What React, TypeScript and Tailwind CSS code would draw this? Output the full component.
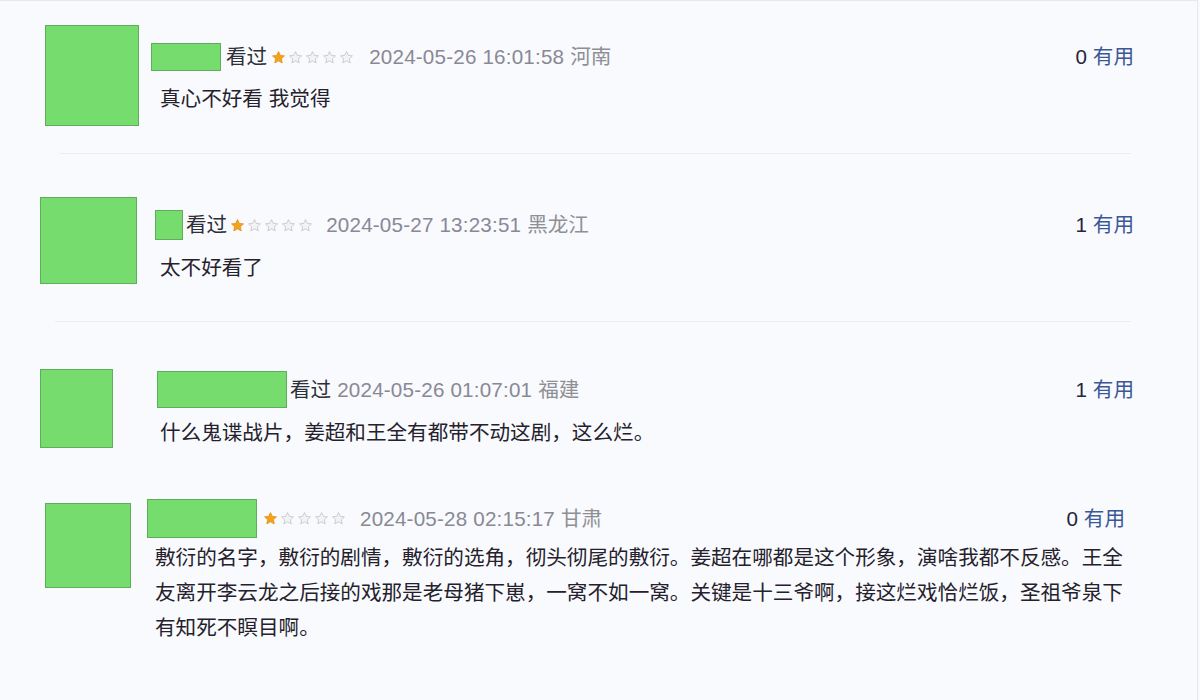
import React from "react"

type Review = {
    block: string
    avatar: string
    side: string
    nameBox: string
    watched: boolean
    watchedGap: string
    stars: boolean
    starsGap: string
    dateGap: string
    date: string
    place: string
    useful: number
    usefulRight: string
    content: string
    contentGap: string
    contentClass: string
}

const reviews: Review[] = [
    {
        block: "h-[152px]",
        avatar: "ml-[45px] mt-[24px] w-[94px] h-[101px]",
        side: "ml-[12px] mt-[42px]",
        nameBox: "w-[70px] h-[28px]",
        watched: true,
        watchedGap: "ml-[5px]",
        stars: true,
        starsGap: "ml-[4px]",
        dateGap: "ml-[15px]",
        date: "2024-05-26 16:01:58",
        place: "河南",
        useful: 0,
        usefulRight: "mr-[63px]",
        content: "真心不好看 我觉得",
        contentGap: "mt-[14px] pl-[9px]",
        contentClass: "leading-[28px]",
    },
    {
        block: "h-[167px]",
        avatar: "ml-[40px] mt-[43px] w-[97px] h-[87px]",
        side: "ml-[18px] mt-[56px]",
        nameBox: "w-[28px] h-[30px]",
        watched: true,
        watchedGap: "ml-[3px]",
        stars: true,
        starsGap: "ml-[3px]",
        dateGap: "ml-[13px]",
        date: "2024-05-27 13:23:51",
        place: "黑龙江",
        useful: 1,
        usefulRight: "mr-[63px]",
        content: "太不好看了",
        contentGap: "mt-[14px] pl-[5px]",
        contentClass: "leading-[28px]",
    },
    {
        block: "h-[159px]",
        avatar: "ml-[40px] mt-[47px] w-[73px] h-[79px]",
        side: "ml-[44px] mt-[49px]",
        nameBox: "w-[130px] h-[37px]",
        watched: true,
        watchedGap: "ml-[3px]",
        stars: false,
        starsGap: "",
        dateGap: "ml-[6px]",
        date: "2024-05-26 01:07:01",
        place: "福建",
        useful: 1,
        usefulRight: "mr-[63px]",
        content: "什么鬼谍战片，姜超和王全有都带不动这剧，这么烂。",
        contentGap: "mt-[11px] pl-[3px]",
        contentClass: "leading-[28px]",
    },
    {
        block: "flex-1",
        avatar: "ml-[45px] mt-[22px] w-[86px] h-[85px]",
        side: "ml-[16px] mt-[18px]",
        nameBox: "w-[110px] h-[39px]",
        watched: false,
        watchedGap: "",
        stars: true,
        starsGap: "ml-[6px]",
        dateGap: "ml-[14px]",
        date: "2024-05-28 02:15:17",
        place: "甘肃",
        useful: 0,
        usefulRight: "mr-[72px]",
        content:
            "敷衍的名字，敷衍的剧情，敷衍的选角，彻头彻尾的敷衍。姜超在哪都是这个形象，演啥我都不反感。王全友离开李云龙之后接的戏那是老母猪下崽，一窝不如一窝。关键是十三爷啊，接这烂戏恰烂饭，圣祖爷泉下有知死不瞑目啊。",
        contentGap: "mt-[2px] pl-[8px]",
        contentClass: "leading-[35px]",
    },
]

const Star: React.FC<{ on: boolean }> = ({ on }) => (
    <svg viewBox="0 0 24 24" className="w-[15px] h-[15px]">
        <path
            d="M12 2.5l2.9 6.1 6.6.8-4.9 4.6 1.3 6.6L12 17.3l-5.9 3.3 1.3-6.6-4.9-4.6 6.6-.8z"
            fill={on ? "#f4a11c" : "#f3f3f5"}
            stroke={on ? "#e8921a" : "#c6c6cc"}
            strokeWidth="1.4"
            strokeLinejoin="round"
        />
    </svg>
)

const ReviewRow: React.FC<{ r: Review }> = ({ r }) => (
    <div className={`flex items-start ${r.block}`}>
        <div className={`shrink-0 bg-[#76dc6e] border border-[#5fae5c] ${r.avatar}`} />
        <div className={`flex-1 flex flex-col ${r.side} ${r.usefulRight}`}>
            <div className="flex items-center">
                <div className={`shrink-0 bg-[#76dc6e] border border-[#5fae5c] ${r.nameBox}`} />
                {r.watched && <span className={`text-[#2e2e36] ${r.watchedGap}`}>看过</span>}
                {r.stars && (
                    <div className={`flex items-center gap-[2px] ${r.starsGap}`}>
                        <Star on />
                        <Star on={false} />
                        <Star on={false} />
                        <Star on={false} />
                        <Star on={false} />
                    </div>
                )}
                <span className={`text-[#8a8896] tracking-[0.2px] ${r.dateGap}`}>
                    {r.date} <span className="text-[#8f8f96] tracking-normal">{r.place}</span>
                </span>
                <span className="ml-auto whitespace-nowrap">
                    <span className="text-[#25253d]">{r.useful}</span>{" "}
                    <span className="text-[#3b5796]">有用</span>
                </span>
            </div>
            <p className={`text-[#25212c] ${r.contentGap} ${r.contentClass}`}>{r.content}</p>
        </div>
    </div>
)

export default function App() {
    return (
        <div className="w-[1200px] h-[700px] overflow-hidden bg-[#f8fafd] text-[20.6px] leading-[28px] font-['Liberation_Sans','Noto_Sans_CJK_SC',sans-serif]">
            <div className="w-[1198px] h-full flex flex-col border-r border-t border-[#e6e8ee]">
                <ReviewRow r={reviews[0]} />
                <div className="ml-[60px] mr-[66px] h-px bg-[#eaedf2] shrink-0" />
                <ReviewRow r={reviews[1]} />
                <div className="ml-[55px] mr-[66px] h-px bg-[#eaedf2] shrink-0" />
                <ReviewRow r={reviews[2]} />
                <ReviewRow r={reviews[3]} />
            </div>
        </div>
    )
}
